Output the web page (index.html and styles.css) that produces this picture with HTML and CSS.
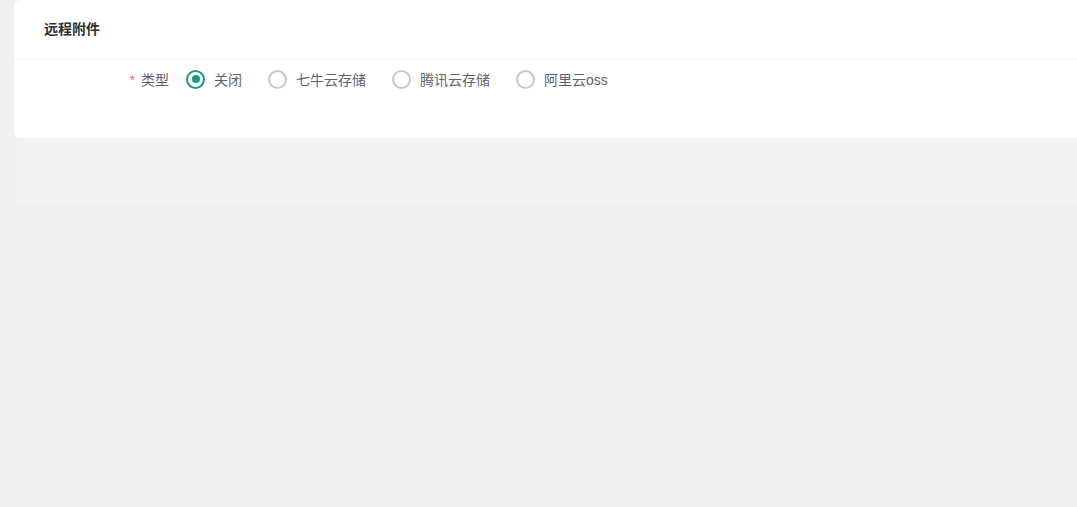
FILE: index.html
```html
<!doctype html>
<html lang="zh-CN">
  <head>
    <meta charset="UTF-8" />
    <meta name="viewport" content="width=device-width, initial-scale=1.0" />
    <title>远程附件</title>
    <link rel="stylesheet" href="styles.css">
  </head>
  <body>
    <div class="page">
      <div class="card">
        <div class="card-header">
          <h2>远程附件</h2>
        </div>

        <form class="card-body">
          <div class="form-item">
            <label class="form-label"><span class="required">*</span>类型</label>
            <div class="radio-group">
              <label class="radio checked">
                <span class="radio-circle"></span>
                <span class="radio-text">关闭</span>
              </label>
              <label class="radio">
                <span class="radio-circle"></span>
                <span class="radio-text">七牛云存储</span>
              </label>
              <label class="radio">
                <span class="radio-circle"></span>
                <span class="radio-text">腾讯云存储</span>
              </label>
              <label class="radio">
                <span class="radio-circle"></span>
                <span class="radio-text">阿里云oss</span>
              </label>
            </div>
          </div>
        </form>
      </div>

      <div class="card-shadow"></div>
    </div>
  </body>
</html>
```

FILE: styles.css
```css
* {
  margin: 0;
  padding: 0;
  box-sizing: border-box;
  font-family: "Liberation Sans", "Noto Sans CJK SC", sans-serif;
}

body {
  min-height: 100vh;
  background: #f0f0f0;
  overflow: hidden;
}

.page {
  padding-left: 14px;
  margin-right: -20px;
}

.card {
  background: white;
  border-radius: 6px;
  overflow: hidden;
}

.card-header {
  height: 60px;
  padding: 0 0 3px 30px;
  display: flex;
  align-items: center;
  border-bottom: 1px solid #f0f0f0;
}

.card-header h2 {
  font-size: 14px;
  font-weight: 700;
  color: #303133;
}

.card-body {
  padding: 3px 0 43px;
}

.form-item {
  display: flex;
  align-items: center;
  height: 32px;
}

.form-label {
  width: 172px;
  padding-right: 17px;
  text-align: right;
  font-size: 14px;
  color: #606266;
}

.required {
  color: #f56c6c;
  margin-right: 6px;
}

.radio-group {
  display: flex;
  align-items: center;
}

.radio {
  display: flex;
  align-items: center;
  margin-right: 26px;
  cursor: pointer;
}

.radio-circle {
  width: 19px;
  height: 19px;
  border: 2px solid #c8c8c8;
  border-radius: 50%;
  display: flex;
  align-items: center;
  justify-content: center;
}

.radio.checked .radio-circle {
  border-color: #16998a;
}

.radio.checked .radio-circle::after {
  content: "";
  width: 8px;
  height: 8px;
  border-radius: 50%;
  background: #16998a;
}

.radio-text {
  padding-left: 9px;
  font-size: 14px;
  color: #5e6270;
}

.card-shadow {
  height: 67px;
  background: #f2f2f2;
}
```
